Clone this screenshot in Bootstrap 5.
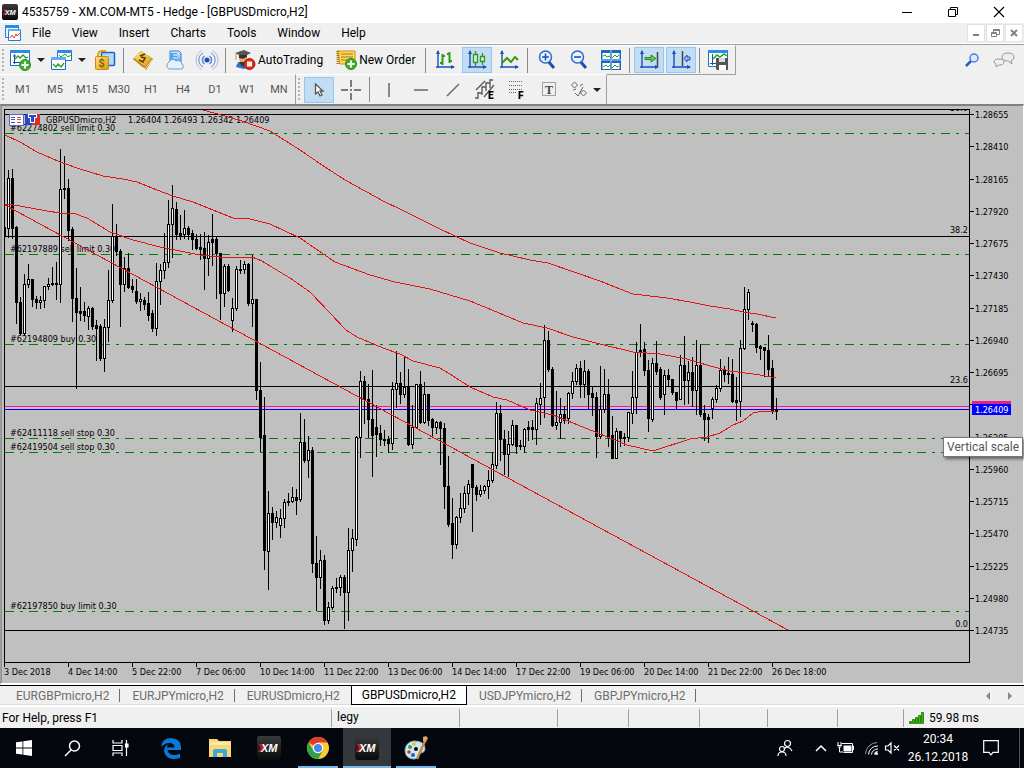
<!DOCTYPE html>
<html lang="en">
<head>
<meta charset="utf-8">
<meta name="viewport" content="width=device-width, initial-scale=1">
<title>4535759 - XM.COM-MT5 - Hedge - [GBPUSDmicro,H2]</title>
<link href="https://cdn.jsdelivr.net/npm/bootstrap@5.3.0/dist/css/bootstrap.min.css" rel="stylesheet">
<style>
  body { font: 12px/16px Roboto, "Open Sans", sans-serif; color: #000; background: #f0f0f0; min-height: 100vh; }
  button { border: 0; background: none; padding: 0; color: inherit; font: inherit; }
  svg { display: block; flex: none; overflow: visible; }
  .title-bar { background: #fff; height: 23px; padding: 0 2px; }
  .win-btn { width: 46px; height: 23px; display: grid; place-items: center; }
  .menu-bar { height: 21px; padding-left: 5px; border-bottom: 1px solid #fff; }
  .menu-bar a { color: #000; text-decoration: none; padding: 0 10px 0 11px; }
  .mdi-btn { width: 18px; height: 18px; background: #fff; border: 1px solid #e2e2e2; display: grid; place-items: center; margin-right: 1px; }
  .tool-strip { height: 30px; border-top: 1px solid #a0a0a0; }
  .tool-group { height: 30px; padding-left: 7px; border-right: 1px solid #a0a0a0; border-top: 1px solid #fff; position: relative; }
  .tool-group::before { content: ""; position: absolute; left: 2px; top: 3px; bottom: 2px; width: 2px;
    background: repeating-linear-gradient(#b4b4b4 0 2px, transparent 2px 4px); }
  .tool-first { border-bottom: 1px solid #a0a0a0; }
  .tb { width: 32px; height: 26px; display: flex; align-items: center; justify-content: center; flex: none; }
  .tb.pick { width: 41px; gap: 6px; }
  .tb.wordy { width: auto; gap: 2px; padding: 0 7px 0 6px; }
  .tb.on { background: #c2dcf3; border: 1px solid #90c8f6; width: 30px; margin: 0 1px; }
  .sep { width: 1px; height: 25px; background: #8a8a8a; flex: none; margin: 0 3px 0 2px; }
  .caret { width: 0; height: 0; border: 4px solid transparent; border-top-color: #222; border-bottom: 0; }
  .frames .tb { color: #555; font-size: 11px; }
  .chart-pane { background: #c0c0c0; border-top: 2px solid #808080; border-left: 1px solid #a0a0a0; border-right: 1px solid #fff; border-bottom: 2px solid #fff;
    display: grid; grid-template-columns: minmax(0, 1fr) 53px; padding: 3px 0 0 3px; position: relative; box-shadow: inset 1px 0 #909090; }
  .plot { border: 1px solid #000; height: 554px; }
  .plot svg, .price-axis svg { width: 100%; height: 100%; overflow: hidden; }
  .price-axis { height: 554px; }
  .chart-pane text, .time-axis { font: 9px "DejaVu Sans Condensed", "DejaVu Sans", sans-serif; }
  .time-axis { height: 20px; overflow: hidden; }
  .time-axis span { width: 64px; flex: none; white-space: nowrap; line-height: 10px; position: relative; padding-top: 4px; }
  .time-axis span::before { content: ""; position: absolute; left: 0; top: 0; width: 1px; height: 4px; background: #000; }
  .scale-tip { position: absolute; right: 0; top: 331px; background: #fff; border: 1px solid #767676; color: #575757; padding: 0 3px; line-height: 18px; box-shadow: 2px 2px 3px rgba(0,0,0,.5); }
  .tab-strip { height: 21px; border-top: 1px solid #000; border-bottom: 1px solid #fff; padding-left: 4px; box-shadow: inset 0 -1px #dcdcdc; }
  .tab-strip button { color: #6d6d6d; padding: 0 11px 0 12px; height: 20px; position: relative; }
  .tab-strip button.bar::after { content: ""; position: absolute; right: 0; top: 3px; width: 1px; height: 13px; background: #6d6d6d; }
  .tab-strip button.now { background: #fff; color: #000; border: 1px solid #000; border-top: 0; height: 19px; padding: 0 10px; }
  .status-bar { height: 22px; border-top: 1px solid #fff; }
  .status-bar div { height: 18px; border-left: 1px solid #a0a0a0; padding-left: 5px; }
  .task-bar { background: #04070d; height: 40px; color: #fff; }
  .app { width: 48px; height: 40px; display: grid; place-items: center; flex: none; position: relative; margin-right: 1px; }
  .app.sys { margin-right: 0; }
  .app.live::after { content: ""; position: absolute; left: 4px; right: 4px; bottom: 0; height: 2px; background: #76b9ed; }
  .app.front { background: #34383c; }
  .app.front::after { left: 0; right: 0; }
  .clock { width: 74px; line-height: 18px; text-align: center; }
  .wifi { margin: 0 6px 0 11px; }
  .show-desk { width: 5px; height: 40px; border-left: 1px solid #555; margin-left: 12px; }
</style>
</head>
<body class="d-flex flex-column">

<svg width="0" height="0" class="position-absolute" aria-hidden="true">
  <defs>
    <linearGradient id="gold" x2="1" y2="1"><stop stop-color="#ffe680"/><stop offset="1" stop-color="#d99a10"/></linearGradient>
    <linearGradient id="sky" x2="0" y2="1"><stop stop-color="#d8ecff"/><stop offset="1" stop-color="#5aa3ec"/></linearGradient>
    <linearGradient id="ink" x2="0" y2="1"><stop stop-color="#3a3a3c"/><stop offset="1" stop-color="#0a0a0a"/></linearGradient>
    <symbol id="xm" viewBox="0 0 24 24">
      <rect width="24" height="24" rx="3" fill="url(#ink)"/>
      <path d="M2 8h3l2 3-4 5H1l3-4z" fill="#d8141c"/>
      <text x="4" y="16" font-family="Liberation Sans, sans-serif" font-size="11" font-weight="700" font-style="italic" fill="#fff">XM</text>
    </symbol>
    <symbol id="plus" viewBox="0 0 12 12"><circle cx="6" cy="6" r="5.5" fill="#3fb02e" stroke="#2a8a1c"/><path d="M6 2.5v7M2.5 6h7" stroke="#fff" stroke-width="2"/></symbol>
    <symbol id="axes" viewBox="0 0 20 20"><path d="M3 1v17M1 17h18" stroke="#1c50b8" fill="none" stroke-width="1.4"/><path d="M1 4l2-4 2 4zM16 15l4 2-4 2z" fill="#1c50b8"/></symbol>
  </defs>
</svg>

<header>
  <div class="title-bar d-flex align-items-center">
    <svg width="16" height="16"><use href="#xm"/></svg>
    <span class="flex-grow-1 ms-1">4535759 - XM.COM-MT5 - Hedge - [GBPUSDmicro,H2]</span>
    <button class="win-btn" aria-label="Minimize"><svg width="10" height="10"><path d="M0 5.500h10" stroke="#000"/></svg></button>
    <button class="win-btn" aria-label="Restore"><svg width="10" height="10" fill="none" stroke="#000"><path d="M.5 2.500h7v7h-7zM2.500 2.500v-2h7v7h-2"/></svg></button>
    <button class="win-btn" aria-label="Close"><svg width="10" height="10"><path d="M0 0l10 10M10 0L0 10" stroke="#000" stroke-width="1.200"/></svg></button>
  </div>
  <nav class="menu-bar d-flex align-items-center" aria-label="Menu">
    <svg width="16" height="16"><path d="M.5.500h13v12H.5z" fill="#eaf4ff" stroke="#2a7ad0"/><path d="M0 0h14v3H0z" fill="#2a8ae8"/><path d="M3.500 4.500h12v11h-12z" fill="#fff" stroke="#2a7ad0"/><path d="M3 4h13v2H3z" fill="#62acf0"/><path d="M5 13l2-3 2 3 2-4 1 2 3-3" stroke="#e05010" fill="none"/></svg>
    <a href="#">File</a><a href="#">View</a><a href="#">Insert</a><a href="#">Charts</a><a href="#">Tools</a><a href="#">Window</a><a href="#">Help</a>
    <button class="mdi-btn ms-auto" aria-label="Minimize chart"><svg width="8" height="8"><path d="M1 6h6" stroke="#77838f" stroke-width="2"/></svg></button>
    <button class="mdi-btn" aria-label="Restore chart"><svg width="9" height="9" fill="none" stroke="#77838f"><path d="M.5 3.500h5v4h-5zM.5 4.500h5M2.500 3V.5h6v5H6M2.500 1.500h6"/></svg></button>
    <button class="mdi-btn" aria-label="Close chart"><svg width="8" height="8"><path d="M1 1l6 6M7 1L1 7" stroke="#77838f" stroke-width="2"/></svg></button>
  </nav>

  <div class="tool-strip d-flex">
    <div class="tool-group tool-first d-flex align-items-center">
      <button class="tb pick" aria-label="New chart"><svg width="21" height="21"><path d="M.5.500h19v15H.5z" fill="#fff" stroke="#1c70c8"/><path d="M0 0h20v3H0z" fill="#2a8ae8"/><path d="M4.500 5v9M3 12.500h13M3.500 6.500l1-2 1 2" stroke="#2050a0" fill="none"/><path d="M5 9l3-3 2 2 3-3 3 3 2-1" stroke="#2a9a20" fill="none" stroke-width="1.300"/><use href="#plus" x="9" y="9" width="12" height="12"/></svg><i class="caret"></i></button>
      <button class="tb pick" aria-label="Profiles"><svg width="21" height="21"><path d="M6.500.500h14v10h-14z" fill="#fff" stroke="#1c70c8"/><path d="M6 0h15v3H6z" fill="#2a8ae8"/><path d="M8 5l2 2 4-3 3 3 3-2" stroke="#2a9a20" fill="none"/><path d="M.5 7.500h14v12H.5z" fill="#fff" stroke="#1c70c8"/><path d="M0 7h15v3H0z" fill="#62acf0"/><path d="M2 14l3 3 2-3 3 3 3-4" stroke="#2a9a20" fill="none" stroke-width="1.300"/></svg><i class="caret"></i></button>
      <button class="tb" aria-label="Market watch"><svg width="20" height="20"><rect x="6.500" y="2.500" width="13" height="13" rx="1" fill="#b4d8ff" stroke="#1c62c0" stroke-width="1.500"/><path d="M3 6q0-5 4-5h4" stroke="#e0a010" fill="none" stroke-width="2"/><rect x=".5" y="6.500" width="13" height="13" rx="1" fill="url(#gold)" stroke="#c88a10"/><text x="3.500" y="17" font-size="11" font-weight="700" fill="#8a5c00">$</text></svg></button>
      <span class="sep"></span>
      <button class="tb" aria-label="Books"><svg width="20" height="20"><path d="M0 9L8 1l12 8-7 11z" fill="#b07c10"/><path d="M1 8L8 1l11 7-7 9z" fill="url(#gold)"/><path d="M1 12l11 7 7-9" stroke="#fff4c0" fill="none"/><path d="M7 6l5-2M8 7l4 1-2 4-4-2" stroke="#5a3a00" fill="none" stroke-width="1.500"/></svg></button>
      <button class="tb" aria-label="Cloud"><svg width="20" height="20"><path d="M5 1h9l2 2v10H5z" fill="url(#sky)" stroke="#2a80d8"/><path d="M6 3h6v8H6z" fill="#4aa4f0"/><path d="M8 5h4M8 8h4" stroke="#fff"/><path d="M4 19a4 4 0 010-7 4 4 0 017-1 4 4 0 016 3 3 3 0 010 5z" fill="#e4f0fc" stroke="#6a9cd0"/></svg></button>
      <button class="tb" aria-label="Signals"><svg width="20" height="20" fill="none" stroke="#5a8ad0"><circle cx="10" cy="10" r="2.500" fill="#1c50b8" stroke="none"/><path d="M7.500 6a5 5 0 000 8M12.500 6a5 5 0 010 8" stroke-width="1.500"/><path d="M6 3a8 8 0 000 14M14 3a8 8 0 010 14"/><path d="M4.500.500a11 11 0 000 19M15.500.500a11 11 0 010 19" stroke="#a0bce8"/></svg></button>
      <span class="sep"></span>
      <button class="tb wordy"><svg width="21" height="20"><path d="M1 17q1-6 7-6 5 0 6 6l-5 2z" fill="#2a70c8"/><circle cx="8" cy="8" r="4" fill="#e8b070"/><path d="M0 3l9-3 7 3-8 4z" fill="#555"/><path d="M4 5v3q4 2 8-1V5" fill="#333"/><path d="M1 4v6" stroke="#c8a030"/><path d="M4 12l4 5 3-5" fill="#333"/><circle cx="14.500" cy="14" r="5.500" fill="#e02a18" stroke="#b01a10"/><path d="M12 11.500h5v5h-5z" fill="#fff"/></svg>AutoTrading</button>
      <button class="tb wordy"><svg width="21" height="20"><path d="M1 1h18v13H4z" fill="#ffd858" stroke="#c89418"/><path d="M2 1v14" stroke="#a87010" stroke-dasharray="1 1" stroke-width="3"/><path d="M5 4h12M5 7h12M5 10h8" stroke="#a87818"/><use href="#plus" x="9" y="8" width="12" height="12"/></svg>New Order</button>
      <span class="sep"></span>
      <button class="tb" aria-label="Bar chart"><svg width="20" height="20"><use href="#axes" width="20" height="20"/><path d="M7.500 4v11M5 13h2.500M7.500 6H10M14.500 2v11M12 4h2.500M14.500 11H17" stroke="#2a9a20" stroke-width="2" fill="none"/></svg></button>
      <button class="tb on" aria-label="Candlesticks"><svg width="20" height="20"><use href="#axes" width="20" height="20"/><path d="M8.500 1v3M8.500 13v3M15.500 3v3M15.500 12v3M6.500 4.500h4v8h-4zM13.500 6.500h4v5h-4z" stroke="#2a9a20" stroke-width="1.300" fill="#d8f0d0"/></svg></button>
      <button class="tb" aria-label="Line chart"><svg width="20" height="20"><use href="#axes" width="20" height="20"/><path d="M3 13l5-5 4 4 4-5 3 3" stroke="#3a9a10" stroke-width="2" fill="none"/></svg></button>
      <span class="sep"></span>
      <button class="tb" aria-label="Zoom in"><svg width="18" height="20" fill="none"><path d="M10 11l6 7" stroke="#1c50a8" stroke-width="3"/><circle cx="7.500" cy="7" r="6" fill="#eaf4ff" stroke="#2a6ac8" stroke-width="1.500"/><path d="M4 7h7M7.500 3.500v7" stroke="#1c50b8" stroke-width="1.600"/></svg></button>
      <button class="tb" aria-label="Zoom out"><svg width="18" height="20" fill="none"><path d="M10 11l6 7" stroke="#1c50a8" stroke-width="3"/><circle cx="7.500" cy="7" r="6" fill="#eaf4ff" stroke="#2a6ac8" stroke-width="1.500"/><path d="M4 7h7" stroke="#1c50b8" stroke-width="1.600"/></svg></button>
      <button class="tb" aria-label="Tile windows"><svg width="20" height="20"><path d="M0 0h20v20H0z" fill="#1c68c0"/><path d="M1.500 3h7.500v6H1.500zM11 3h7.500v6H11zM1.500 13h7.500v6H1.500zM11 13h7.500v6H11z" fill="#fff"/><path d="M0 10h20M10 0v20" stroke="#a8d0f8"/><path d="M2 6l2-1 2 2 3-1M11 8l3-3 2 2 2-2M2 17l3-2 2 2 2-2M11 18l3-3 2 2 2-1" stroke="#2a9a20" fill="none"/></svg></button>
      <span class="sep"></span>
      <button class="tb on" aria-label="Auto scroll"><svg width="20" height="20"><use href="#axes" width="20" height="20"/><path d="M18.500 2v14" stroke="#444" stroke-width="1.500"/><path d="M6 7.500h6V5l5 3.500-5 3.500v-2.500H6z" fill="#62cc48" stroke="#2a8a1c"/></svg></button>
      <button class="tb on" aria-label="Chart shift"><svg width="20" height="20"><use href="#axes" width="20" height="20"/><path d="M11.500 1v15" stroke="#444" stroke-width="1.500"/><path d="M19 7h-3V5l-3 3.500 3 3.500v-2h3z" fill="#8cbcf8" stroke="#1c50b8"/></svg></button>
      <span class="sep"></span>
      <button class="tb" aria-label="Save template"><svg width="21" height="20"><path d="M.5.500h19v16H.5z" fill="#fff" stroke="#1c70c8"/><path d="M0 0h20v3H0z" fill="#2a8ae8"/><path d="M4.500 4v11M2 13.500h8" stroke="#2050a0"/><path d="M5 9l4-4 3 2 4-3 3 2" stroke="#2a9a20" fill="none" stroke-width="1.500"/><path d="M8 8h12v12H9l-1-1z" fill="#555"/><path d="M11 8h6v4h-6z" fill="#ddd"/><path d="M11 15h7v5h-7z" fill="#fff"/></svg></button>
    </div>
    <div class="ms-auto d-flex align-items-center pe-1">
      <button class="tb" aria-label="Search"><svg width="14" height="14" fill="none"><path d="M1 13l5-5" stroke="#2a5ab8" stroke-width="2.500"/><circle cx="9" cy="5" r="4" fill="#dcecff" stroke="#4a80e0" stroke-width="1.500"/></svg></button>
      <button class="tb" aria-label="Chat"><svg width="22" height="16" fill="#eee" stroke="#999"><path d="M15 1q6 0 6 4 0 3-3 4l1 3-4-3q-6 0-6-4t6-4z"/><path d="M6 7q5 0 5 3t-5 3l-3 2v-3q-2-1-2-2 0-3 5-3z"/></svg></button>
    </div>
  </div>

  <div class="d-flex">
    <div class="tool-group frames d-flex align-items-center">
      <button class="tb">M1</button><button class="tb">M5</button><button class="tb">M15</button><button class="tb">M30</button><button class="tb">H1</button><button class="tb">H4</button><button class="tb">D1</button><button class="tb">W1</button><button class="tb">MN</button>
    </div>
    <div class="tool-group d-flex align-items-center">
      <button class="tb on" aria-label="Cursor"><svg width="10" height="14"><path d="M1.500 1v10l2.500-2 2 4 2-1-2-4h3z" fill="#fff" stroke="#555" stroke-width="1.300"/></svg></button>
      <button class="tb" aria-label="Crosshair"><svg width="20" height="20" stroke="#555" stroke-width="1.500"><path d="M0 10h7M13 10h7M10 0v7M10 13v7M9 10h2"/></svg></button>
      <span class="sep"></span>
      <button class="tb" aria-label="Vertical line"><svg width="20" height="14"><path d="M10 0v14" stroke="#666" stroke-width="1.500"/></svg></button>
      <button class="tb" aria-label="Horizontal line"><svg width="14" height="14"><path d="M0 7h14" stroke="#666" stroke-width="1.500"/></svg></button>
      <button class="tb" aria-label="Trend line"><svg width="14" height="14"><path d="M1 13L13 1" stroke="#666" stroke-width="1.500"/></svg></button>
      <button class="tb" aria-label="Channel"><svg width="20" height="20" fill="none" stroke="#555"><path d="M1 10L10 1M9 17L19 5M0 18h3v-6M3 13h4M7 15V7h4M11 11V3h4M15 8V0h3" stroke-width="1.300"/><text x="13" y="19" font-size="10" font-weight="900" fill="#000" stroke="none">E</text></svg></button>
      <button class="tb" aria-label="Fibonacci"><svg width="20" height="20" fill="none" stroke="#666"><path d="M2 1.500h14M2 5.500h14M2 9.500h14M2 12.500h7" stroke-dasharray="1 1"/><text x="11" y="19" font-size="10" font-weight="900" fill="#000" stroke="none">F</text></svg></button>
      <button class="tb" aria-label="Text"><svg width="14" height="15"><path d="M.5.500h13v13H.5z" fill="none" stroke="#555" stroke-dasharray="1 1"/><text x="3" y="12" font-family="Liberation Serif, serif" font-weight="700" font-size="12" fill="#444">T</text></svg></button>
      <button class="tb pick" aria-label="Shapes"><svg width="16" height="16" fill="none" stroke="#666"><path d="M3.500 0l3 3-3 3-3-3zM12.500 8l3 3-3 3-3-3zM4 11l3 3 5-9M2 8l3-1M9 4l3-2"/></svg><i class="caret"></i></button>
    </div>
  </div>
</header>

<main class="chart-pane">
  <div class="plot"><svg id="plot"></svg></div>
  <div class="price-axis"><svg id="scale"></svg></div>
  <div class="time-axis d-flex" id="times"></div>
  <div class="scale-tip" role="tooltip">Vertical scale</div>
</main>

<nav class="tab-strip d-flex" aria-label="Charts">
  <button class="bar">EURGBPmicro,H2</button><button class="bar">EURJPYmicro,H2</button><button>EURUSDmicro,H2</button><button class="now">GBPUSDmicro,H2</button><button class="bar">USDJPYmicro,H2</button><button class="bar">GBPJPYmicro,H2</button>
  <button class="ms-auto p-0" aria-label="Scroll left"><svg width="22" height="8"><path d="M6 0v8L2 4z" fill="#888"/></svg></button>
  <button class="p-0" aria-label="Scroll right"><svg width="18" height="8"><path d="M2 0v8l4-4z" fill="#888"/></svg></button>
</nav>

<footer>
  <div class="status-bar d-flex align-items-center" id="status">
    <span class="flex-grow-1" style="padding-left:2px">For Help, press F1</span>
    <div style="width:128px">legy</div><div style="width:98px"></div><div style="width:71px"></div><div style="width:71px"></div><div style="width:68px"></div><div style="width:70px"></div><div style="width:66px"></div>
    <div class="d-flex align-items-center gap-1" style="width:121px"><svg width="16" height="12" fill="#3cb814" stroke="#2a8a10"><path d="M.5 9.500h2v2h-2zM3.500 7.500h2v4h-2zM6.500 5.500h2v6h-2zM9.500 3.500h2v8h-2zM12.500.500h2v11h-2z"/></svg>59.98 ms</div>
  </div>
  <div class="task-bar d-flex align-items-center">
    <button class="app sys" aria-label="Start"><svg width="16" height="16" fill="#fff"><path d="M0 2.300l6.500-.9v6.200H0zM7.300 1.300L16 0v7.600H7.300zM0 8.400h6.500v6.200L0 13.700zM7.300 8.400H16V16l-8.700-1.300z"/></svg></button>
    <button class="app sys" aria-label="Search"><svg width="17" height="17" fill="none" stroke="#fff" stroke-width="1.500"><circle cx="10.500" cy="6" r="5"/><path d="M7 10l-6 6"/></svg></button>
    <button class="app" style="margin-right:3px" aria-label="Task view"><svg width="17" height="16" fill="none" stroke="#fff" stroke-width="1.200"><path d="M1 0v3h9V0M1 16v-3h9v3M1 5.500h9v5H1zM14.500 0v16"/><path d="M13.500 4h2.500v3h-2.500z" fill="#fff"/></svg></button>
    <button class="app" aria-label="Edge"><svg width="20" height="21"><path d="M0 9Q1 0 10.500 0 20 1 20 9v3H6.500q1 5 6.500 5 3 0 6-1.500v4.500q-3 1-7 1-8-1-9-8 0-5 5-7-2 1.500-2 3.500h7.500q0-4-4.500-4.500Q4 5 0 9z" fill="#0a78d6"/></svg></button>
    <button class="app" aria-label="File explorer"><svg width="22" height="18"><path d="M0 0h8l2 2h12v16H0z" fill="#f8d775"/><path d="M1 3h20v3H1z" fill="#fbe9a8"/><path d="M4 18v-6q0-2 2-2h10q2 0 2 2v6h-4v-4H8v4z" fill="#3aa8d8"/></svg></button>
    <button class="app" aria-label="XM"><svg width="24" height="24"><use href="#xm"/></svg></button>
    <button class="app live" aria-label="Chrome"><svg width="22" height="22"><circle cx="11" cy="11" r="11" fill="#fbcc30"/><path d="M11 11L1.500 5.500A11 11 0 0120.500 5.500H11z" fill="#e03c2c"/><path d="M1.500 5.500A11 11 0 0011 22l5-8.500-9 1z" fill="#2fa04c"/><circle cx="11" cy="11" r="5.200" fill="#fff"/><circle cx="11" cy="11" r="4" fill="#4688f0"/></svg></button>
    <button class="app live front" aria-label="XM MT5"><svg width="24" height="24"><use href="#xm"/></svg></button>
    <button class="app live" aria-label="Paint"><svg width="24" height="24"><path d="M10 5q11 0 11 8 0 3-4 4-3 0-3 3t-5 3q-8-1-8-9 1-8 9-9z" fill="#cfe6f4" stroke="#8ab4d0"/><circle cx="6" cy="11" r="2" fill="#40a040"/><circle cx="10" cy="8" r="1.800" fill="#e8c020"/><circle cx="5" cy="16" r="1.800" fill="#d83020"/><circle cx="9" cy="19" r="2" fill="#2060c0"/><circle cx="12" cy="13" r="2" fill="#04070d"/><path d="M21 5l-8 18" stroke="#c88a40" stroke-width="2.500"/><path d="M19 1l3-1 2 2-2 4-3-1z" fill="#d8a868"/></svg></button>
    <button class="ms-auto tb" aria-label="People"><svg width="16" height="16" fill="none" stroke="#fff" stroke-width="1.200"><circle cx="10.500" cy="3.500" r="3"/><path d="M9 7q4 0 6 4M10 7q-2 1-3 2"/><circle cx="5" cy="9" r="2.500"/><path d="M1 16q0-4 4-4t4 4"/></svg></button>
    <button class="tb ms-1" aria-label="Hidden icons"><svg width="12" height="8"><path d="M1 7l5-5 5 5" fill="none" stroke="#fff" stroke-width="1.500"/></svg></button>
    <svg width="17" height="12"><path d="M6.500 3.500h8v6h-8z" fill="#fff"/><path d="M4.500 1.500h11v9h-9M15.500 4h1v4M1 0v3M4 0v3M0 3.500h5M1 5h3M2.500 5v5H6" fill="none" stroke="#fff"/></svg>
    <svg class="wifi" width="14" height="13" fill="none" stroke="#fff"><path d="M.5 12A12 12 0 0112 .5" stroke="#999"/><path d="M3.500 12.500A9 9 0 0113 4M6.500 12.500A6 6 0 0113 7"/><path d="M9.500 12.500a3 3 0 013-3" /><circle cx="11.500" cy="11.500" r="1.500" fill="#fff" stroke="none"/></svg>
    <svg width="16" height="12" fill="none" stroke="#fff"><path d="M.5 4h2.500l3-3v10l-3-3H.5zM9 3.500l5 5M14 3.500l-5 5" stroke-width="1.200"/></svg>
    <div class="clock">20:34<br>26.12.2018</div>
    <button class="tb" aria-label="Notifications"><svg width="16" height="16"><path d="M.7.700h14.600v11.600H10L8 14.800l-2-2.500H.7z" fill="none" stroke="#fff" stroke-width="1.200"/></svg></button>
    <span class="show-desk"></span>
  </div>
</footer>

<script src="https://cdn.jsdelivr.net/npm/bootstrap@5.3.0/dist/js/bootstrap.bundle.min.js"></script>
<script>
// One bar per entry, 4px apart: high, body top, body bottom, low; "u" marks a rising bar.
const bars = `227 227 236 236|170 178 228 237u|169 178 228 238|226 227 302 323|297 302 333 334|274 284 333 335u|264 279 284 287u|279 279 299 306|296 299 302 308|296 300 302 308u|286 286 300 307u|278 284 286 289u|267 283 284 285|262 283 284 299|149 189 284 302u|156 188 189 198|179 188 230 240|227 229 298 321|268 298 312 388|287 311 313 320|302 311 315 321|306 308 316 329u|307 308 326 329|320 325 328 360|324 326 358 360|319 327 358 371u|270 300 327 341u|204 236 300 302u|224 236 251 255|249 251 284 326|257 268 284 291u|253 268 287 288|279 286 289 292|279 291 301 303|293 299 301 310u|297 300 304 309|292 303 315 320|310 313 328 331|263 281 328 335u|264 270 281 304u|233 262 270 278u|200 224 262 267u|185 208 224 257u|202 209 234 239|215 233 235 239|210 228 234 238u|226 228 234 239|230 233 239 249|234 239 248 249|234 247 249 259|232 248 258 289|235 242 258 275u|214 239 242 265|236 239 253 298|253 253 293 319|264 266 293 306u|264 266 290 291|298 308 320 331u|266 269 308 310u|260 269 270 273|261 264 269 273u|263 264 303 305|255 299 303 326u|299 299 390 399|362 390 437 451|397 435 550 569|491 513 551 589u|507 513 522 539|511 517 522 527u|509 518 525 537u|499 502 518 527u|493 501 502 505|487 497 501 502u|489 497 500 514|413 442 499 501u|419 442 460 462|436 450 460 477u|447 450 563 572|536 563 577 610|550 560 577 588u|555 560 620 624|602 607 620 623u|586 588 607 609u|578 587 588 592|575 577 587 595u|575 577 592 628|528 550 592 620u|529 538 550 571u|436 437 539 545u|371 381 437 457u|376 381 399 423|384 399 419 437|370 419 435 476|405 427 434 456|425 433 439 445|430 439 440 445|436 439 443 452|382 389 443 449u|351 383 389 407u|372 383 394 403|357 387 394 397u|369 387 444 445|405 427 444 448u|384 384 427 428u|371 384 422 423|382 394 422 423u|394 394 420 425|418 419 427 437|421 422 427 433u|421 422 428 464|423 428 486 508|456 486 524 526|498 523 544 558|516 517 544 548u|493 508 517 522u|486 493 508 512u|480 484 493 504u|464 464 487 531|485 487 494 500|485 490 494 496u|485 486 490 493u|470 480 486 498u|452 464 480 482u|402 413 465 468u|405 413 439 460|430 439 454 474|431 444 454 476u|420 425 444 445u|425 425 446 453|440 445 446 449|428 429 446 452u|421 427 429 440|420 427 429 439|398 403 429 444u|383 398 404 424u|325 340 397 417u|331 340 369 371|367 369 425 426|391 422 425 429u|398 414 422 438u|406 414 420 423|392 393 418 423u|372 381 393 398u|364 368 381 384u|361 368 384 397|360 371 384 397u|369 371 394 409|387 393 397 415|392 397 436 457|366 409 436 438u|369 394 409 412u|379 394 436 446|416 435 458 458|428 431 458 458u|431 431 438 446|433 437 438 445|412 412 437 441u|371 397 413 423u|342 352 397 413u|324 350 352 356|342 349 370 375|360 370 418 431|358 363 419 421u|341 363 371 374|367 369 397 399|370 375 394 414u|369 375 379 385|379 379 392 394|392 392 400 408|355 365 399 399u|336 365 380 404|361 372 380 403u|357 372 390 406|340 365 390 414u|344 365 414 416|405 413 419 440|414 417 419 442|397 399 408 418u|385 388 399 402u|359 370 388 391u|366 370 374 381|357 373 374 383|359 374 401 402|377 400 402 420|340 348 401 416u|287 309 348 349u|289 292 309 319u|321 323 324 331|323 324 347 352|345 346 348 359|347 347 350 376|335 350 369 376|360 368 410 413|398 409 411 419`.split("|");
const averages = [
  "203,110 225,116 242,121 270,131 300,150 325,167 345,180 385,202 400,209 440,229 470,243 500,253 530,260 548,263 600,281 620,289 633,294 667,298 690,302 710,306 730,309 743,312 757,314 776,318",
  "5,135 20,142 37,152 60,162 80,169 103,176 123,179 137,182 157,190 173,196 193,202 213,210 233,218 250,219 270,224 300,238 335,262 370,275 395,282 430,289 470,301 492,310 523,323 547,328 573,337 600,344 633,352 660,354 687,359 710,366 730,371 760,375 776,378",
  "5,204 20,206 47,211 60,213 73,213 87,218 110,232 133,240 160,247 200,255 220,257 252,257 262,261 270,266 290,278 310,292 330,313 346,330 357,337 383,348 400,354 413,361 440,368 453,376 470,387 493,397 507,400 530,410 553,415 573,423 600,434 627,445 653,451 690,439 707,437 720,433 733,425 743,421 753,413 763,411 776,411",
  "5,205 788,630"
];
const orders = [[133, "#62274802 sell limit 0.30"], [254, "#62197889 sell limit 0.30"], [344, "#62194809 buy 0.30"],
  [438, "#62411118 sell stop 0.30"], [452, "#62419504 sell stop 0.30"], [611, "#62197850 buy limit 0.30"]];
const fib = [[114, "50.0"], [236, "38.2"], [386, "23.6"], [630, "0.0"]];

const rule = (y, h, color) => `<rect x="5" y="${y}" width="100%" height="${h}" fill="${color}"/>`;
let s = '<defs><pattern id="dashdot" x="5" width="24" height="1000" patternUnits="userSpaceOnUse"><path d="M0 0h9v1000H0zM15 0h3v1000h-3z" fill="#008000"/></pattern></defs>';
s += '<g transform="translate(-5 -110)" shape-rendering="crispEdges">';
for (const [y] of orders) s += rule(y, 1, "url(#dashdot)");
for (const [y] of fib) s += rule(y, 1, "#000");
s += rule(406, 1, "#d8287c") + rule(407, 2, "#dfb0e4") + rule(409, 1, "#0000e0");
for (const [y, t] of orders) s += `<text x="10" y="${y - 2}">${t}</text>`;
s += '<text x="46" y="123">GBPUSDmicro,H2</text>';
["1.26404", "1.26493", "1.26342", "1.26409"].forEach((t, i) => s += `<text x="${128 + i * 36}" y="123">${t}</text>`);
s += '<path d="M9 114h14v11H9z" fill="#fff" stroke="#5068c8"/><path d="M11 117h4M11 119.500h4M11 122h4" stroke="#4058c0"/><path d="M17 117h4M17 119.500h4M17 122h4" stroke="#e04848"/>';
s += '<path d="M25 114h7v11h-7z" fill="#2848c8"/><path d="M32 114h8v11h-8z" fill="#d83030"/><path d="M28 114h9v4h-2v5h-5v-5h-2z" fill="#fff"/><path d="M29 115h7v2h-2v5h-3v-5h-2z" fill="#2848c8"/>';
bars.forEach((bar, i) => {
  const x = 4 + i * 4, [h, a, b, l] = bar.replace("u", "").split(" ").map(Number);
  s += `<rect x="${x}" y="${h}" width="1" height="${l - h + 1}"/><rect x="${x - 1}" y="${a}" width="3" height="${b - a + 1}"/>`;
  if (bar.endsWith("u") && b - a > 1) s += `<rect x="${x}" y="${a + 1}" width="1" height="${b - a - 1}" fill="#fff"/>`;
});
for (const p of averages) s += `<polyline points="${p}" fill="none" stroke="#e01414"/>`;
s += "</g>";
for (const [y, t] of fib) s += `<text x="100%" dx="-1" y="${y === 114 ? 1 : y - 113}" text-anchor="end">${t}</text>`;
document.getElementById("plot").innerHTML = s;

let a = "";
for (let i = 0; i < 17; i++) {
  const y = Math.round(5 + i * 32.25);
  a += `<path d="M0 ${y + .5}h4" stroke="#000"/><text x="5" y="${y + 4}">${(1.28655 - i * .00245).toFixed(5)}</text>`;
}
a += '<path d="M2 292h39v12H2z" fill="#e0208c"/><path d="M2 295h39v11H2z" fill="#00f"/><text x="5" y="304" fill="#fff">1.26409</text>';
document.getElementById("scale").innerHTML = a;

document.getElementById("times").innerHTML = ["3 Dec 2018", "4 Dec 14:00", "5 Dec 22:00", "7 Dec 06:00", "10 Dec 14:00", "11 Dec 22:00", "13 Dec 06:00",
  "14 Dec 14:00", "17 Dec 22:00", "19 Dec 06:00", "20 Dec 14:00", "21 Dec 22:00", "26 Dec 18:00"].map(t => `<span>${t}</span>`).join("");
</script>
</body>
</html>
